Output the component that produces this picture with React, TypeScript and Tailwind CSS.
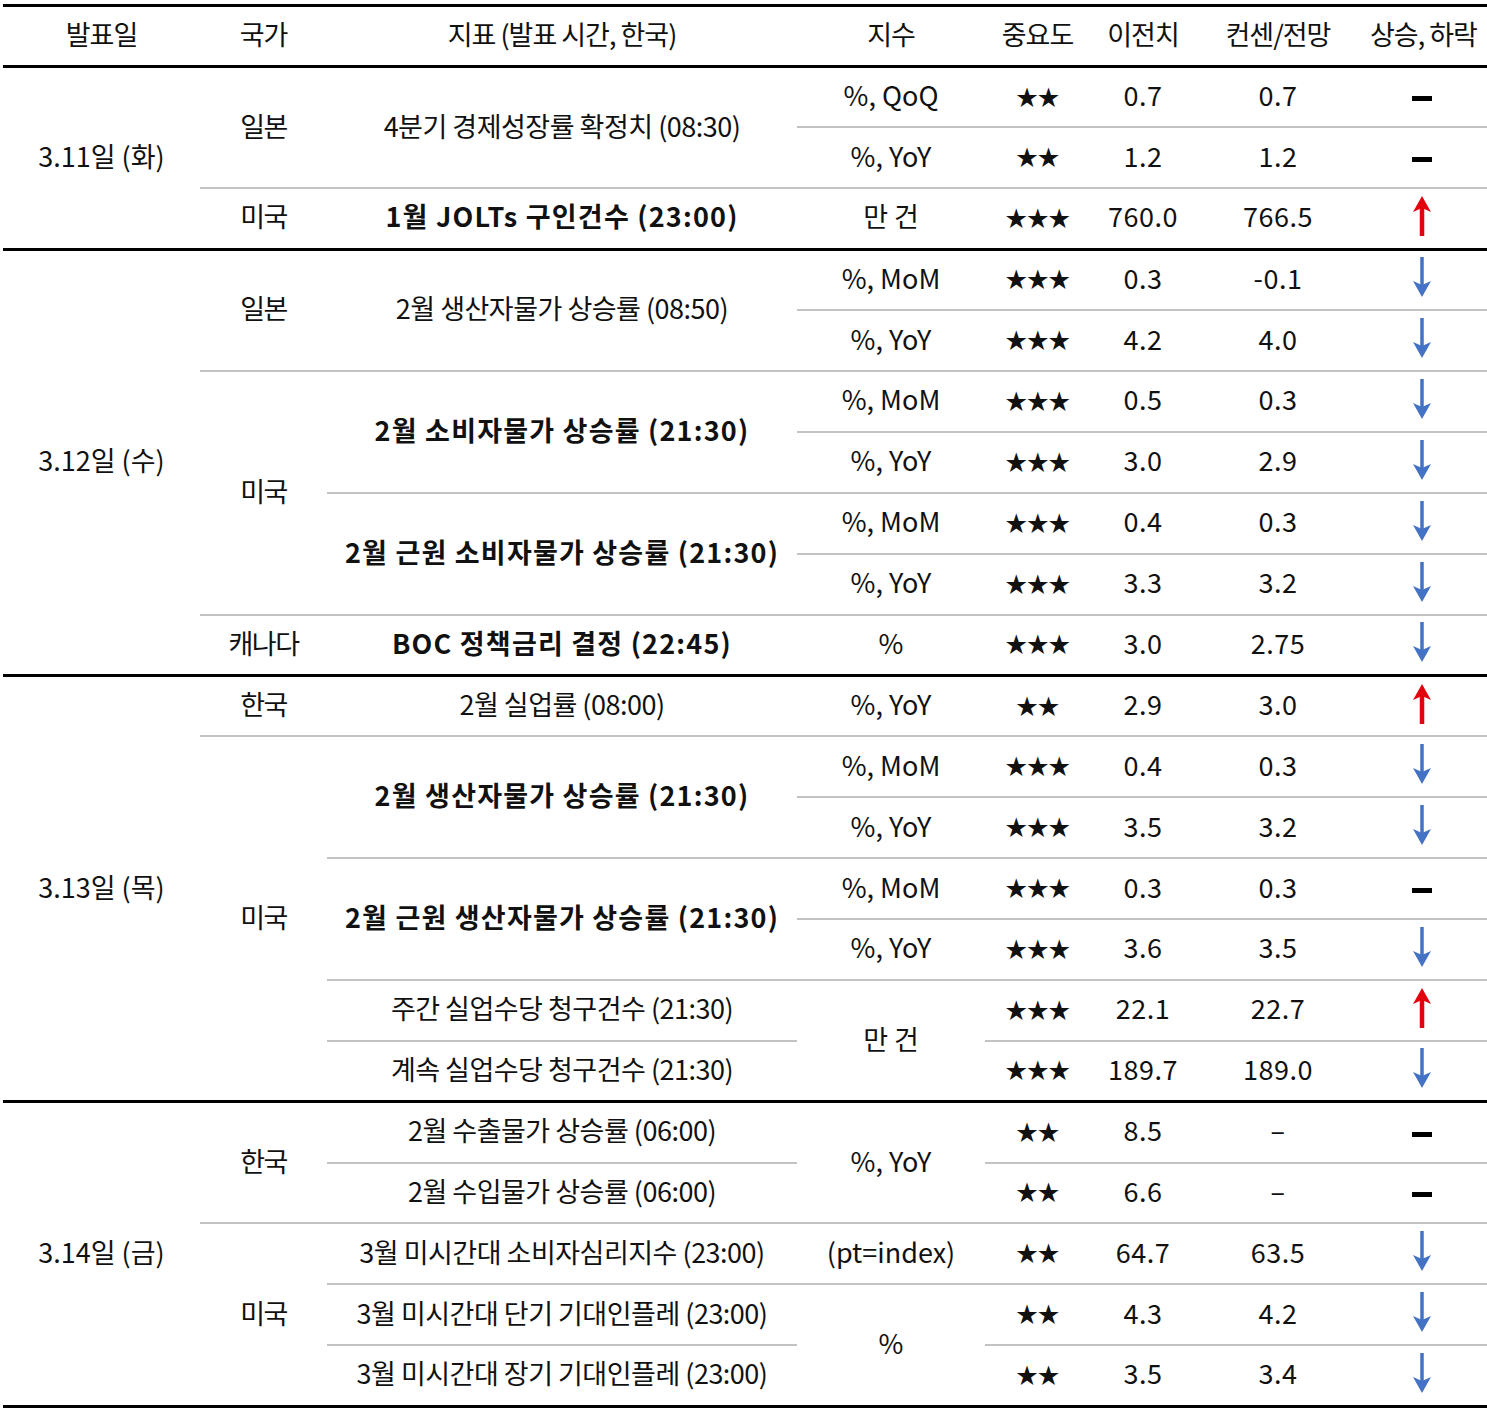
import React from "react";

type Trend = "up" | "down" | "flat";

type Cell = { text: string; span?: number; bold?: boolean };

type Row = {
  date?: Cell;
  country?: Cell;
  indicator?: Cell;
  unit?: Cell;
  stars: number;
  prev: string;
  cons: string;
  trend: Trend;
};

// 그룹별 행 (rowSpan 은 첫 행에만)
const GROUPS: Row[][] = [
  [
    { date: { text: "3.11일 (화)", span: 3 }, country: { text: "일본", span: 2 }, indicator: { text: "4분기 경제성장률 확정치 (08:30)", span: 2 }, unit: { text: "%, QoQ" }, stars: 2, prev: "0.7", cons: "0.7", trend: "flat" },
    { unit: { text: "%, YoY" }, stars: 2, prev: "1.2", cons: "1.2", trend: "flat" },
    { country: { text: "미국" }, indicator: { text: "1월 JOLTs 구인건수 (23:00)", bold: true }, unit: { text: "만 건" }, stars: 3, prev: "760.0", cons: "766.5", trend: "up" },
  ],
  [
    { date: { text: "3.12일 (수)", span: 7 }, country: { text: "일본", span: 2 }, indicator: { text: "2월 생산자물가 상승률 (08:50)", span: 2 }, unit: { text: "%, MoM" }, stars: 3, prev: "0.3", cons: "-0.1", trend: "down" },
    { unit: { text: "%, YoY" }, stars: 3, prev: "4.2", cons: "4.0", trend: "down" },
    { country: { text: "미국", span: 4 }, indicator: { text: "2월 소비자물가 상승률 (21:30)", span: 2, bold: true }, unit: { text: "%, MoM" }, stars: 3, prev: "0.5", cons: "0.3", trend: "down" },
    { unit: { text: "%, YoY" }, stars: 3, prev: "3.0", cons: "2.9", trend: "down" },
    { indicator: { text: "2월 근원 소비자물가 상승률 (21:30)", span: 2, bold: true }, unit: { text: "%, MoM" }, stars: 3, prev: "0.4", cons: "0.3", trend: "down" },
    { unit: { text: "%, YoY" }, stars: 3, prev: "3.3", cons: "3.2", trend: "down" },
    { country: { text: "캐나다" }, indicator: { text: "BOC 정책금리 결정 (22:45)", bold: true }, unit: { text: "%" }, stars: 3, prev: "3.0", cons: "2.75", trend: "down" },
  ],
  [
    { date: { text: "3.13일 (목)", span: 7 }, country: { text: "한국" }, indicator: { text: "2월 실업률 (08:00)" }, unit: { text: "%, YoY" }, stars: 2, prev: "2.9", cons: "3.0", trend: "up" },
    { country: { text: "미국", span: 6 }, indicator: { text: "2월 생산자물가 상승률 (21:30)", span: 2, bold: true }, unit: { text: "%, MoM" }, stars: 3, prev: "0.4", cons: "0.3", trend: "down" },
    { unit: { text: "%, YoY" }, stars: 3, prev: "3.5", cons: "3.2", trend: "down" },
    { indicator: { text: "2월 근원 생산자물가 상승률 (21:30)", span: 2, bold: true }, unit: { text: "%, MoM" }, stars: 3, prev: "0.3", cons: "0.3", trend: "flat" },
    { unit: { text: "%, YoY" }, stars: 3, prev: "3.6", cons: "3.5", trend: "down" },
    { indicator: { text: "주간 실업수당 청구건수 (21:30)" }, unit: { text: "만 건", span: 2 }, stars: 3, prev: "22.1", cons: "22.7", trend: "up" },
    { indicator: { text: "계속 실업수당 청구건수 (21:30)" }, stars: 3, prev: "189.7", cons: "189.0", trend: "down" },
  ],
  [
    { date: { text: "3.14일 (금)", span: 5 }, country: { text: "한국", span: 2 }, indicator: { text: "2월 수출물가 상승률 (06:00)" }, unit: { text: "%, YoY", span: 2 }, stars: 2, prev: "8.5", cons: "–", trend: "flat" },
    { indicator: { text: "2월 수입물가 상승률 (06:00)" }, stars: 2, prev: "6.6", cons: "–", trend: "flat" },
    { country: { text: "미국", span: 3 }, indicator: { text: "3월 미시간대 소비자심리지수 (23:00)" }, unit: { text: "(pt=index)" }, stars: 2, prev: "64.7", cons: "63.5", trend: "down" },
    { indicator: { text: "3월 미시간대 단기 기대인플레 (23:00)" }, unit: { text: "%", span: 2 }, stars: 2, prev: "4.3", cons: "4.2", trend: "down" },
    { indicator: { text: "3월 미시간대 장기 기대인플레 (23:00)" }, stars: 2, prev: "3.5", cons: "3.4", trend: "down" },
  ],
];

const HEADERS = ["발표일", "국가", "지표 (발표 시간, 한국)", "지수", "중요도", "이전치", "컨센/전망", "상승, 하락"];
const WIDTHS = ["w-[197px]", "w-[127px]", "w-[470px]", "w-[188px]", "w-[105px]", "w-[106px]", "w-[164px]", "w-[127px]"];

function TrendMark({ trend }: { trend: Trend }) {
  if (trend === "flat") {
    return <span className="inline-block w-[20px] h-[5px] bg-black align-middle" />;
  }
  if (trend === "up") {
    return (
      <svg width="22" height="42" viewBox="0 0 22 42" className="inline-block align-middle">
        <line x1="11" y1="41" x2="11" y2="12" stroke="#e3000f" strokeWidth="4.5" />
        <path d="M11 1 L20 17 L11 13 L2 17 Z" fill="#e3000f" />
      </svg>
    );
  }
  return (
    <svg width="22" height="42" viewBox="0 0 22 42" className="inline-block align-middle">
      <line x1="11" y1="1" x2="11" y2="30" stroke="#4472c4" strokeWidth="3.5" />
      <path d="M11 41 L20 25 L11 29 L2 25 Z" fill="#4472c4" />
    </svg>
  );
}

export default function App() {
  const cellBase = "text-center align-middle p-0 pb-[5px] whitespace-nowrap";
  const gray = "border-b-2 border-b-[#c3c3c3]";
  const black = "border-b-[3px] border-b-black";

  return (
    <div className="w-[1487px] bg-white pt-[4px] pl-[3px] font-['Noto_Sans_CJK_KR','Noto_Sans',sans-serif] text-[#111] text-[27px] leading-none">
      <table className="w-[1484px] border-collapse table-fixed">
        <colgroup>
          {WIDTHS.map((w, i) => (
            <col key={i} className={w} />
          ))}
        </colgroup>
        <thead>
          <tr className="h-[61px]">
            {HEADERS.map((h) => (
              <th key={h} className={`${cellBase} font-normal tracking-[-1px] border-t-[3px] border-t-black ${black}`}>
                {h}
              </th>
            ))}
          </tr>
        </thead>
        <tbody>
          {GROUPS.map((rows, g) =>
            rows.map((row, r) => {
              const edge = (span = 1) => (r + span - 1 === rows.length - 1 ? black : gray);
              return (
                <tr key={`${g}-${r}`} className="h-[60.9px]">
                  {row.date && (
                    <td rowSpan={row.date.span} className={`${cellBase} ${black} tracking-[0px]`}>
                      {row.date.text}
                    </td>
                  )}
                  {row.country && (
                    <td rowSpan={row.country.span} className={`${cellBase} ${edge(row.country.span)} tracking-[-1.5px]`}>
                      {row.country.text}
                    </td>
                  )}
                  {row.indicator && (
                    <td
                      rowSpan={row.indicator.span}
                      className={`${cellBase} ${edge(row.indicator.span)} ${
                        row.indicator.bold ? "font-bold tracking-[1.2px]" : "tracking-[-0.5px]"
                      }`}
                    >
                      {row.indicator.text}
                    </td>
                  )}
                  {row.unit && (
                    <td rowSpan={row.unit.span} className={`${cellBase} ${edge(row.unit.span)}`}>
                      {row.unit.text}
                    </td>
                  )}
                  <td className={`${cellBase} ${edge()} text-[22px] tracking-[-0.5px]`}>
                    {"★".repeat(row.stars)}
                  </td>
                  <td className={`${cellBase} ${edge()} tracking-[0.5px]`}>{row.prev}</td>
                  <td className={`${cellBase} ${edge()} tracking-[0.5px]`}>{row.cons}</td>
                  <td className={`${cellBase} ${edge()} pb-[2px] pr-[4px]`}>
                    <TrendMark trend={row.trend} />
                  </td>
                </tr>
              );
            })
          )}
        </tbody>
      </table>
      <div className="w-[1484px] h-[2px] bg-black mt-[2px]" />
    </div>
  );
}
